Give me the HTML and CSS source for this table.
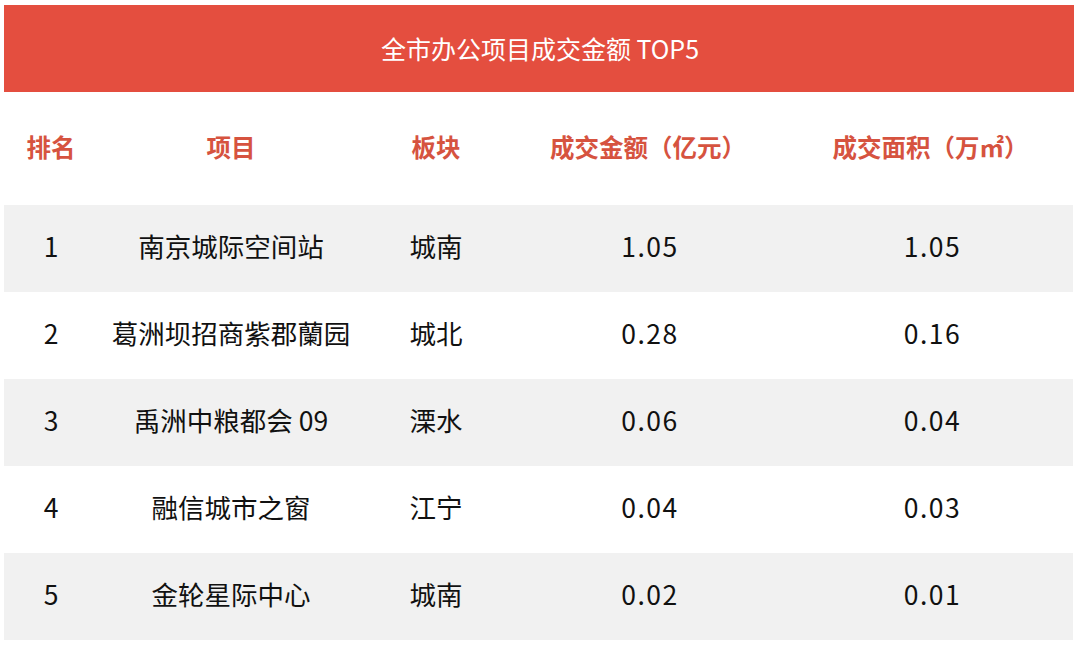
FILE: index.html
```html
<!DOCTYPE html>
<html lang="zh-CN">
<head>
<meta charset="utf-8">
<title>全市办公项目成交金额 TOP5</title>
<link rel="stylesheet" href="styles.css">
</head>
<body>
<div class="page">
  <div class="title-bar">全市办公项目成交金额 TOP5</div>
  <div class="table">
    <div class="row head">
      <div class="cell">排名</div>
      <div class="cell">项目</div>
      <div class="cell">板块</div>
      <div class="cell">成交金额（亿元）</div>
      <div class="cell">成交面积（万㎡）</div>
    </div>
    <div class="row shade">
      <div class="cell">1</div>
      <div class="cell">南京城际空间站</div>
      <div class="cell">城南</div>
      <div class="cell num">1.05</div>
      <div class="cell num">1.05</div>
    </div>
    <div class="row">
      <div class="cell">2</div>
      <div class="cell">葛洲坝招商紫郡蘭园</div>
      <div class="cell">城北</div>
      <div class="cell num">0.28</div>
      <div class="cell num">0.16</div>
    </div>
    <div class="row shade">
      <div class="cell">3</div>
      <div class="cell">禹洲中粮都会 09</div>
      <div class="cell">溧水</div>
      <div class="cell num">0.06</div>
      <div class="cell num">0.04</div>
    </div>
    <div class="row">
      <div class="cell">4</div>
      <div class="cell">融信城市之窗</div>
      <div class="cell">江宁</div>
      <div class="cell num">0.04</div>
      <div class="cell num">0.03</div>
    </div>
    <div class="row shade">
      <div class="cell">5</div>
      <div class="cell">金轮星际中心</div>
      <div class="cell">城南</div>
      <div class="cell num">0.02</div>
      <div class="cell num">0.01</div>
    </div>
  </div>
</div>
</body>
</html>
```

FILE: styles.css
```css
html, body {
  margin: 0;
  padding: 0;
  background: #ffffff;
}

body {
  font-family: "Noto Sans CJK SC", "Noto Sans", "Liberation Sans", sans-serif;
  color: #111111;
}

.page {
  padding: 5px 6px 0 4px;
  width: 1070px;
}

.title-bar {
  height: 87px;
  width: 1070px;
  background: #e44e3f;
  color: #ffffff;
  font-size: 25px;
  display: flex;
  align-items: center;
  justify-content: center;
  padding-left: 2px;
  padding-bottom: 2px;
  box-sizing: border-box;
}

.table {
  width: 1069px;
  display: flex;
  flex-direction: column;
}

.row {
  display: grid;
  grid-template-columns: 94px 266px 144px 280px 285px;
  height: 87px;
  align-items: center;
  font-size: 26.5px;
  padding-bottom: 6px;
  box-sizing: border-box;
}

.row.head {
  height: 113px;
  color: #d6533f;
  font-weight: bold;
  font-size: 24.5px;
  padding-bottom: 5px;
}

.row.shade {
  background: #f1f1f1;
}

.cell {
  text-align: center;
  white-space: nowrap;
}

.num {
  letter-spacing: 1.5px;
  padding-left: 4px;
}
```
